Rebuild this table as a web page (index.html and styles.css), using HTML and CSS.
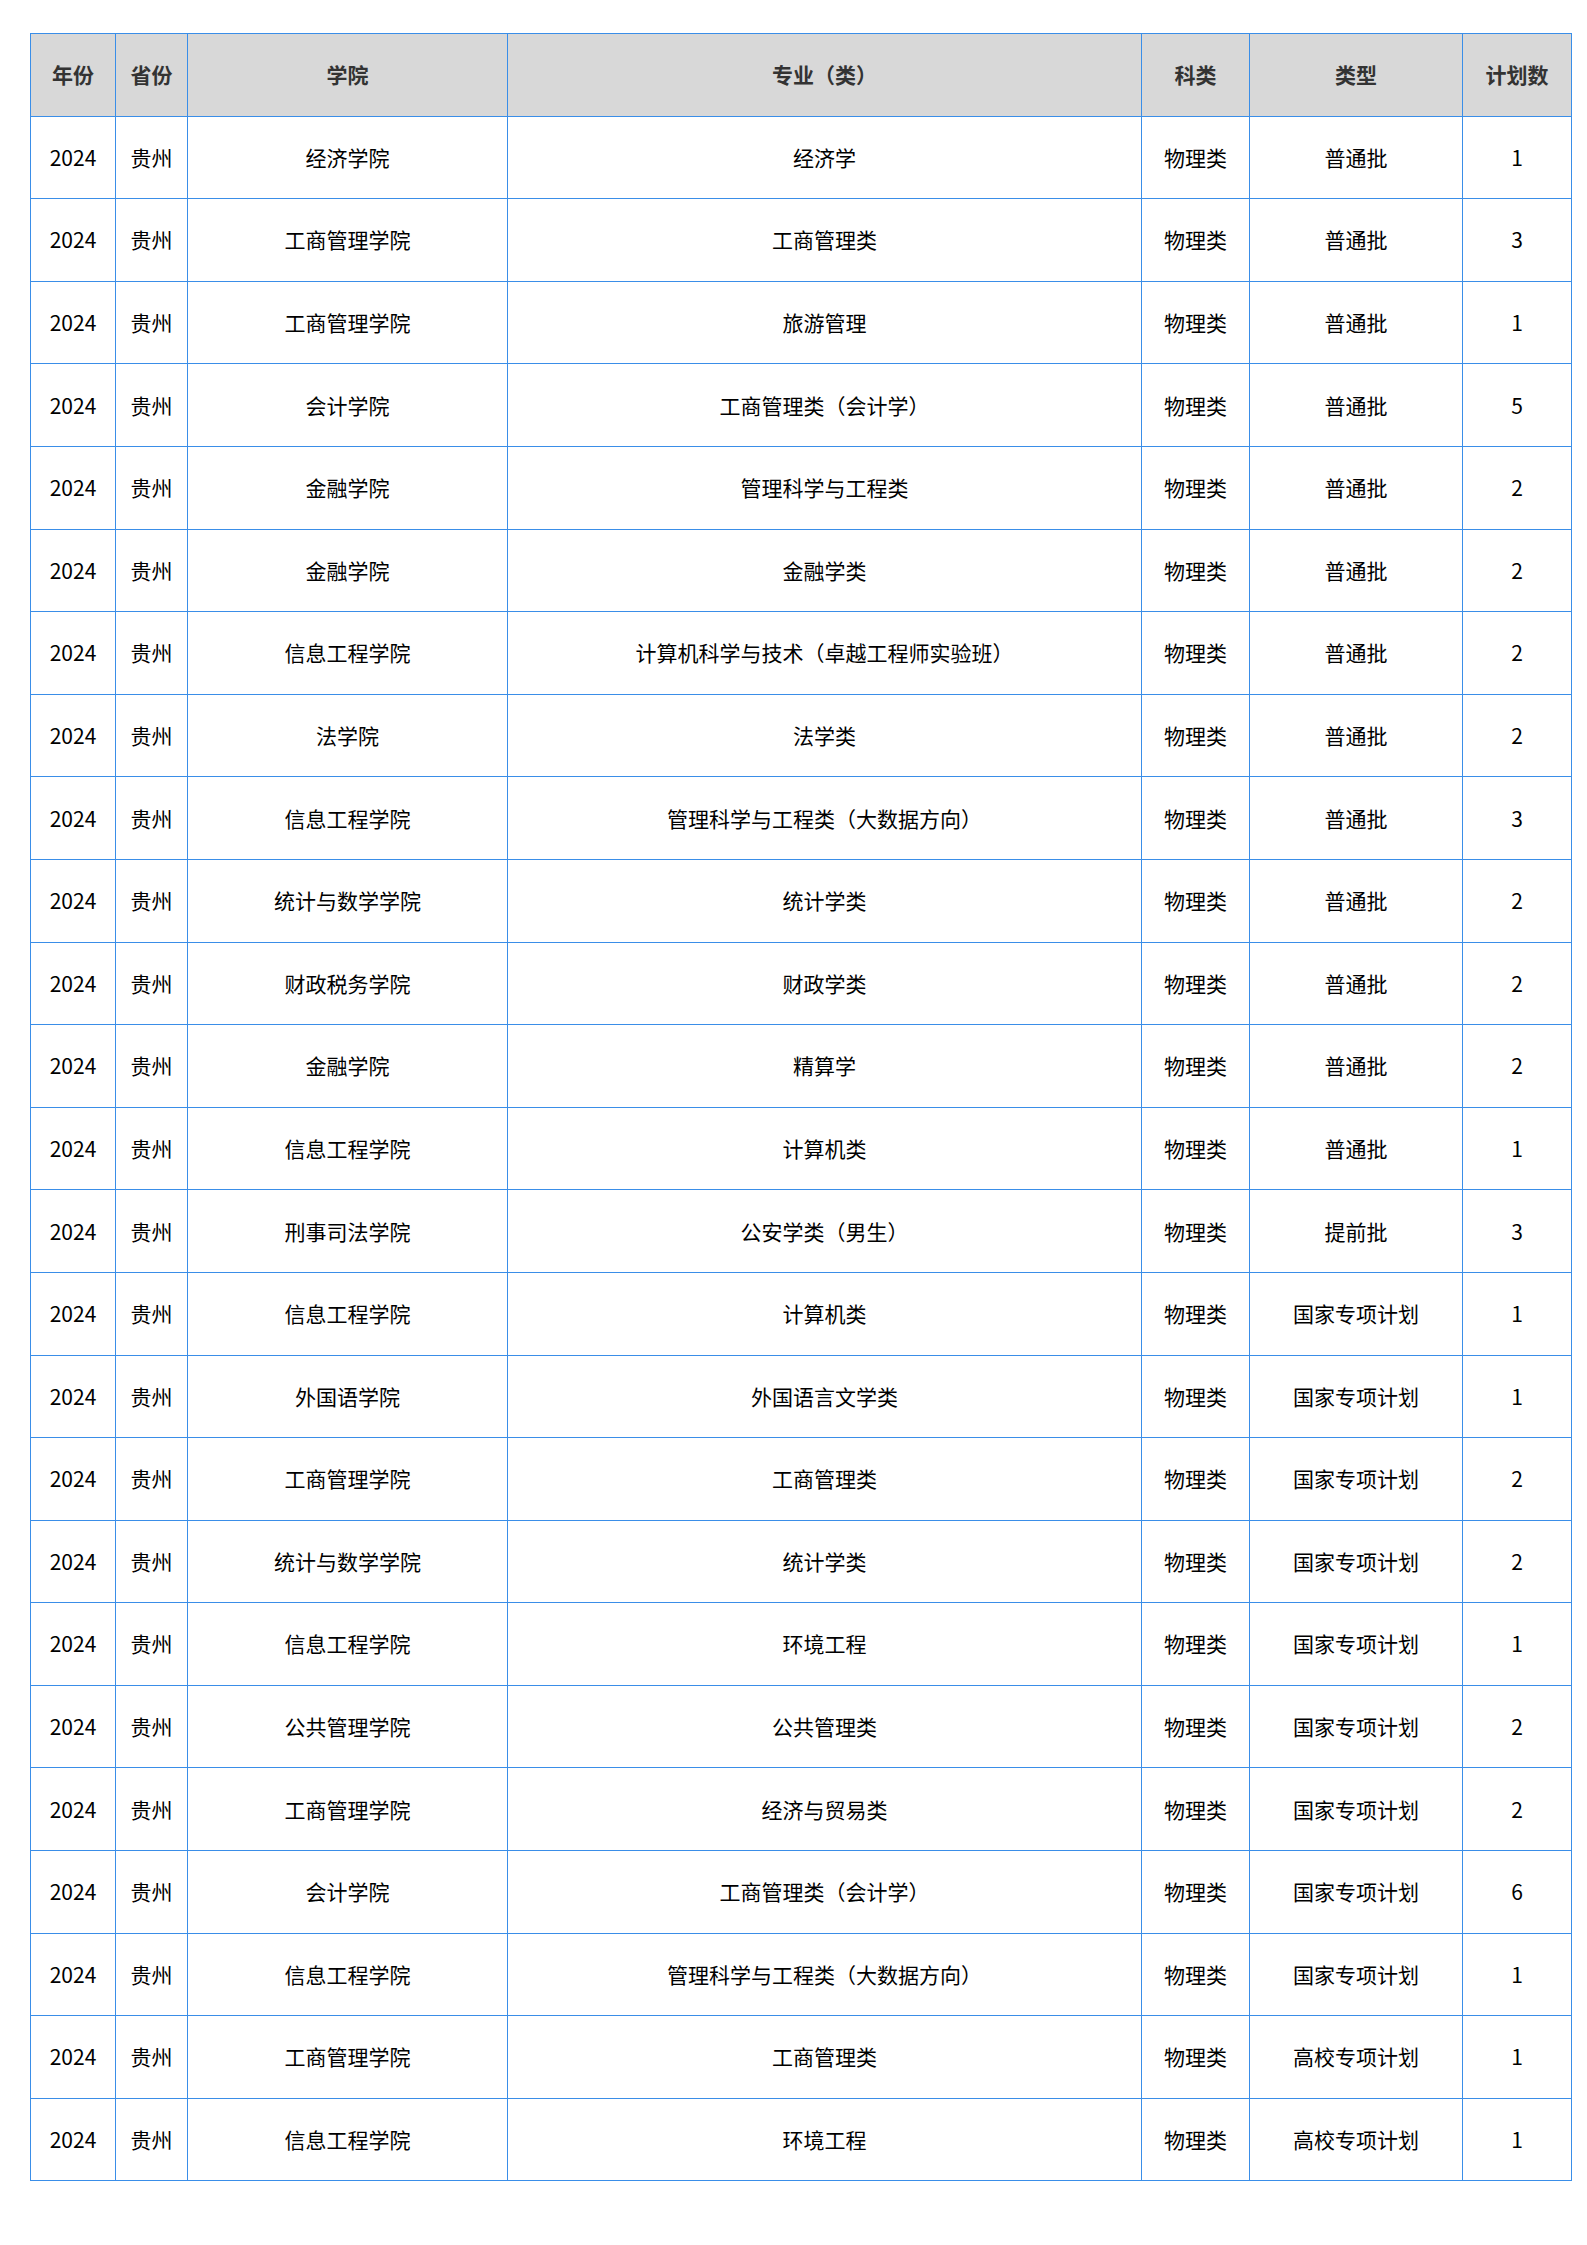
FILE: index.html
```html
<!DOCTYPE html>
<html lang="zh-CN">
<head>
<meta charset="utf-8">
<title>招生计划</title>
<link rel="stylesheet" href="styles.css">
</head>
<body>
<table class="plan">
<colgroup>
<col class="c-year"><col class="c-prov"><col class="c-school"><col class="c-major"><col class="c-subj"><col class="c-type"><col class="c-num">
</colgroup>
<thead>
<tr><th>年份</th><th>省份</th><th>学院</th><th>专业（类）</th><th>科类</th><th>类型</th><th>计划数</th></tr>
</thead>
<tbody>
<tr><td>2024</td><td>贵州</td><td>经济学院</td><td>经济学</td><td>物理类</td><td>普通批</td><td>1</td></tr>
<tr><td>2024</td><td>贵州</td><td>工商管理学院</td><td>工商管理类</td><td>物理类</td><td>普通批</td><td>3</td></tr>
<tr><td>2024</td><td>贵州</td><td>工商管理学院</td><td>旅游管理</td><td>物理类</td><td>普通批</td><td>1</td></tr>
<tr><td>2024</td><td>贵州</td><td>会计学院</td><td>工商管理类（会计学）</td><td>物理类</td><td>普通批</td><td>5</td></tr>
<tr><td>2024</td><td>贵州</td><td>金融学院</td><td>管理科学与工程类</td><td>物理类</td><td>普通批</td><td>2</td></tr>
<tr><td>2024</td><td>贵州</td><td>金融学院</td><td>金融学类</td><td>物理类</td><td>普通批</td><td>2</td></tr>
<tr><td>2024</td><td>贵州</td><td>信息工程学院</td><td>计算机科学与技术（卓越工程师实验班）</td><td>物理类</td><td>普通批</td><td>2</td></tr>
<tr><td>2024</td><td>贵州</td><td>法学院</td><td>法学类</td><td>物理类</td><td>普通批</td><td>2</td></tr>
<tr><td>2024</td><td>贵州</td><td>信息工程学院</td><td>管理科学与工程类（大数据方向）</td><td>物理类</td><td>普通批</td><td>3</td></tr>
<tr><td>2024</td><td>贵州</td><td>统计与数学学院</td><td>统计学类</td><td>物理类</td><td>普通批</td><td>2</td></tr>
<tr><td>2024</td><td>贵州</td><td>财政税务学院</td><td>财政学类</td><td>物理类</td><td>普通批</td><td>2</td></tr>
<tr><td>2024</td><td>贵州</td><td>金融学院</td><td>精算学</td><td>物理类</td><td>普通批</td><td>2</td></tr>
<tr><td>2024</td><td>贵州</td><td>信息工程学院</td><td>计算机类</td><td>物理类</td><td>普通批</td><td>1</td></tr>
<tr><td>2024</td><td>贵州</td><td>刑事司法学院</td><td>公安学类（男生）</td><td>物理类</td><td>提前批</td><td>3</td></tr>
<tr><td>2024</td><td>贵州</td><td>信息工程学院</td><td>计算机类</td><td>物理类</td><td>国家专项计划</td><td>1</td></tr>
<tr><td>2024</td><td>贵州</td><td>外国语学院</td><td>外国语言文学类</td><td>物理类</td><td>国家专项计划</td><td>1</td></tr>
<tr><td>2024</td><td>贵州</td><td>工商管理学院</td><td>工商管理类</td><td>物理类</td><td>国家专项计划</td><td>2</td></tr>
<tr><td>2024</td><td>贵州</td><td>统计与数学学院</td><td>统计学类</td><td>物理类</td><td>国家专项计划</td><td>2</td></tr>
<tr><td>2024</td><td>贵州</td><td>信息工程学院</td><td>环境工程</td><td>物理类</td><td>国家专项计划</td><td>1</td></tr>
<tr><td>2024</td><td>贵州</td><td>公共管理学院</td><td>公共管理类</td><td>物理类</td><td>国家专项计划</td><td>2</td></tr>
<tr><td>2024</td><td>贵州</td><td>工商管理学院</td><td>经济与贸易类</td><td>物理类</td><td>国家专项计划</td><td>2</td></tr>
<tr><td>2024</td><td>贵州</td><td>会计学院</td><td>工商管理类（会计学）</td><td>物理类</td><td>国家专项计划</td><td>6</td></tr>
<tr><td>2024</td><td>贵州</td><td>信息工程学院</td><td>管理科学与工程类（大数据方向）</td><td>物理类</td><td>国家专项计划</td><td>1</td></tr>
<tr><td>2024</td><td>贵州</td><td>工商管理学院</td><td>工商管理类</td><td>物理类</td><td>高校专项计划</td><td>1</td></tr>
<tr><td>2024</td><td>贵州</td><td>信息工程学院</td><td>环境工程</td><td>物理类</td><td>高校专项计划</td><td>1</td></tr>
</tbody>
</table>
</body>
</html>
```

FILE: styles.css
```css
html, body {
  margin: 0;
  padding: 0;
  background: #ffffff;
}
body {
  padding: 33px 0 0 30px;
  font-family: "Noto Sans CJK SC", "Noto Sans", sans-serif;
}
.plan {
  border-collapse: collapse;
  table-layout: fixed;
  width: 1541px;
  font-size: 21px;
  color: #000;
}
.c-year { width: 85px; }
.c-prov { width: 72px; }
.c-school { width: 320px; }
.c-major { width: 634px; }
.c-subj { width: 108px; }
.c-type { width: 213px; }
.c-num { width: 109px; }
.plan th, .plan td {
  border: 1px solid #3a8ee8;
  text-align: center;
  vertical-align: middle;
  padding: 0;
  height: 81.6px;
  line-height: 1.2;
}
.plan th {
  background: #d8d8d8;
  color: #333333;
  font-weight: bold;
}
.plan td {
  font-weight: normal;
}
```
